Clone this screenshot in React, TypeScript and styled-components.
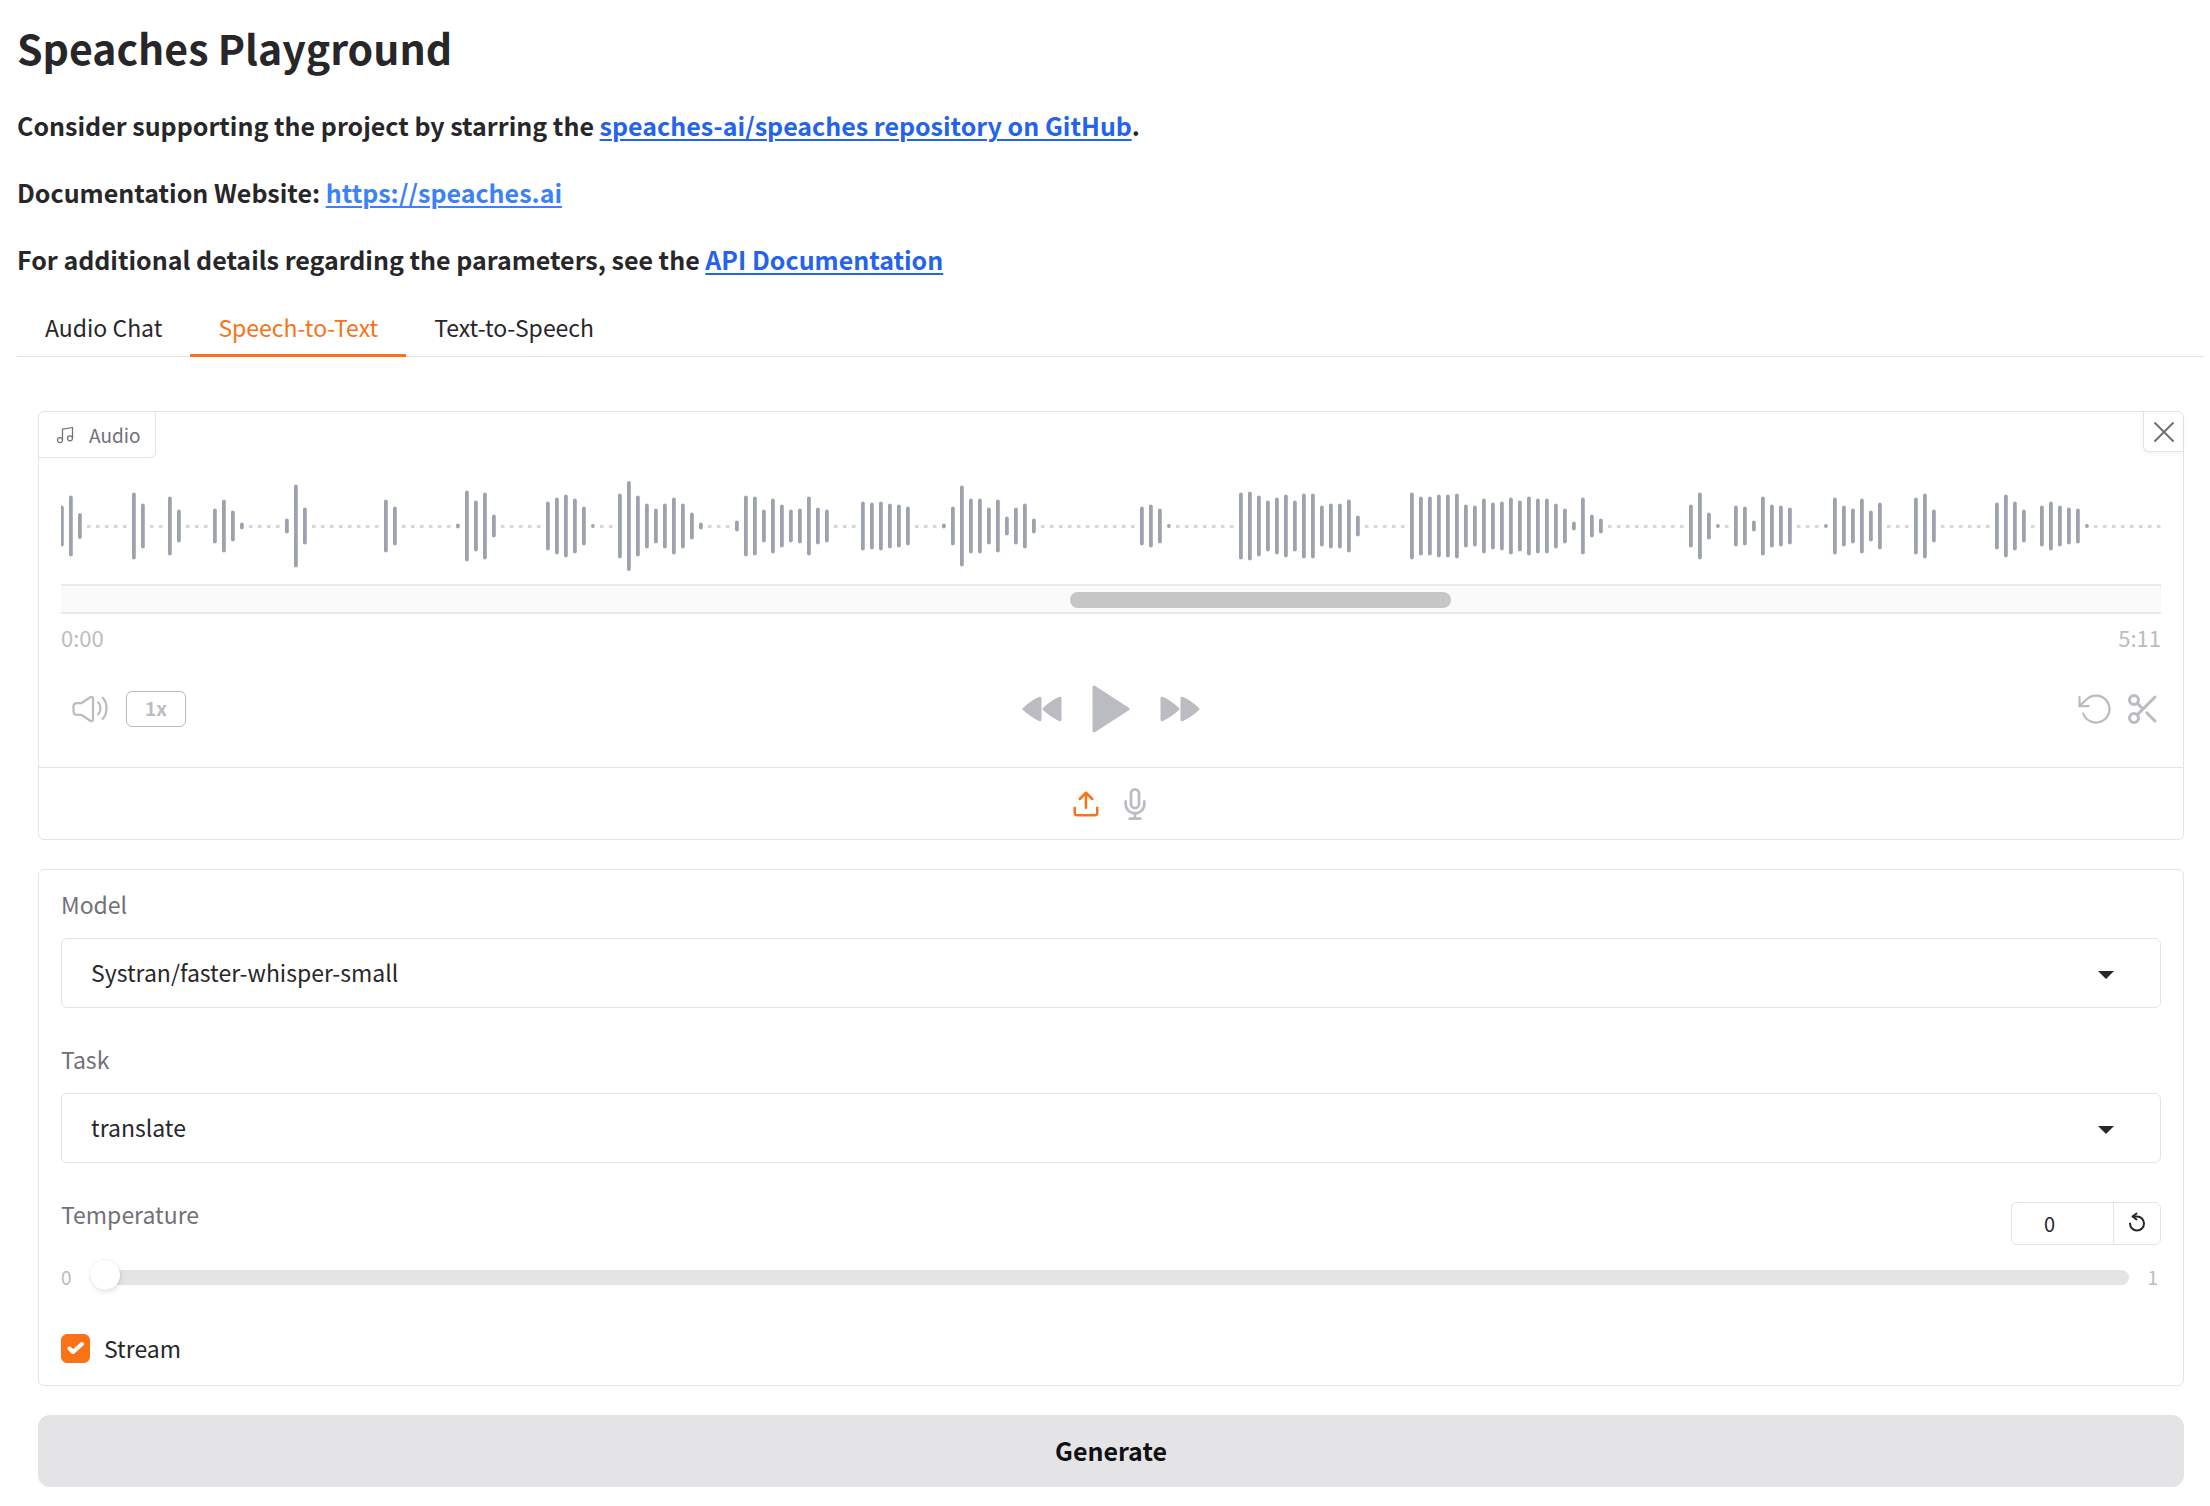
import React, { useState } from "react";
import styled, { createGlobalStyle } from "styled-components";

const colors = {
  text: "#27272a",
  muted: "#71717a",
  faint: "#bbbbc2",
  border: "#e4e4e7",
  accent: "#f97316",
  link: "#2563eb",
  linkSoft: "#3b82f6",
};

const GlobalStyle = createGlobalStyle`
  *, *::before, *::after { box-sizing: border-box; }
  body {
    margin: 0;
    background: #fff;
    color: ${colors.text};
    font-family: "Noto Sans CJK SC", "Source Sans Pro", "Noto Sans", sans-serif;
    font-size: 23px;
    line-height: 32px;
  }
  button, input, select { font: inherit; color: inherit; margin: 0; }
  svg { display: block; }
`;

const Page = styled.main`
  padding: 23px 6px 20px 17px;
`;

const Title = styled.h1`
  margin: 0 0 34px;
  font-size: 41px;
  line-height: 48px;
  font-weight: 600;
`;

const Notes = styled.div`
  display: flex;
  flex-direction: column;
  gap: 27px;
`;

const Note = styled.h3`
  margin: 0;
  font-size: 25px;
  line-height: 40px;
  font-weight: 600;
`;

const Link = styled.a<{ $soft?: boolean }>`
  color: ${(p) => (p.$soft ? colors.linkSoft : colors.link)};
  text-decoration-thickness: 2px;
  text-underline-offset: 3px;
`;

const TabBar = styled.div`
  display: flex;
  margin-top: 21px;
  box-shadow: inset 0 -1px 0 ${colors.border};
`;

const Tab = styled.button<{ $active?: boolean }>`
  height: 57px;
  padding: 0 28px;
  border: 0;
  border-bottom: 3px solid ${(p) => (p.$active ? colors.accent : "transparent")};
  background: none;
  color: ${(p) => (p.$active ? colors.accent : colors.text)};
`;

const Content = styled.section`
  display: flex;
  flex-direction: column;
  gap: 29px;
  padding: 54px 20px 0 21px;
`;

const Panel = styled.div`
  border: 1px solid ${colors.border};
  border-radius: 6px;
`;

const PanelTop = styled.div`
  display: flex;
  justify-content: space-between;
  align-items: flex-start;
`;

const BlockLabel = styled.div`
  display: flex;
  align-items: center;
  gap: 14px;
  height: 46px;
  padding: 0 15px 0 16px;
  border: solid ${colors.border};
  border-width: 0 1px 1px 0;
  border-radius: 0 0 6px 0;
  color: ${colors.muted};
  font-size: 19px;
`;

const CloseButton = styled.button`
  display: grid;
  place-items: center;
  width: 40px;
  height: 40px;
  padding: 0;
  border: solid ${colors.border};
  border-width: 0 0 1px 1px;
  border-radius: 0 6px 0 6px;
  background: #fff;
  color: ${colors.muted};
  box-shadow: 0 2px 4px rgba(0, 0, 0, 0.05);
`;

const Player = styled.div`
  padding: 13px 22px 34px;
`;

const Wave = styled.svg`
  width: 100%;
  height: 113px;
`;

const ScrollTrack = styled.div`
  height: 30px;
  padding: 6px 0;
  border: solid #e9e9e9;
  border-width: 2px 0;
  background: #fafafa;
`;

const ScrollThumb = styled.div`
  height: 16px;
  border-radius: 8px;
  background: #c6c6c6;
`;

const Times = styled.div`
  display: flex;
  justify-content: space-between;
  margin-top: 7px;
  color: ${colors.faint};
  font-size: 22px;
`;

const Controls = styled.div`
  display: grid;
  grid-template-columns: 1fr auto 1fr;
  align-items: center;
  margin-top: 32px;
  color: ${colors.faint};
`;

const Group = styled.div<{ $gap: number; $align?: string }>`
  display: flex;
  align-items: center;
  justify-content: ${(p) => p.$align ?? "flex-start"};
  gap: ${(p) => p.$gap}px;
`;

const LeftGroup = styled(Group)`
  padding-left: 11px;
`;

const IconButton = styled.button<{ $color?: string }>`
  padding: 0;
  border: 0;
  background: none;
  color: ${(p) => p.$color ?? "inherit"};
`;

const SpeedButton = styled.button`
  width: 60px;
  height: 36px;
  padding: 0 0 2px;
  border: 1px solid ${colors.faint};
  border-radius: 6px;
  background: none;
  color: ${colors.faint};
  font-size: 19px;
  font-weight: 700;
  line-height: 32px;
`;

const Sources = styled.div`
  display: flex;
  justify-content: center;
  align-items: center;
  gap: 18px;
  height: 72px;
  border-top: 1px solid ${colors.border};
  color: ${colors.faint};
`;

const Form = styled(Panel)`
  display: flex;
  flex-direction: column;
  padding: 18px 22px 21px;
`;

const Field = styled.div`
  display: flex;
  flex-direction: column;
  gap: 18px;
  margin-bottom: 35px;
`;

const Label = styled.label`
  color: ${colors.muted};
`;

const SelectBox = styled.div`
  display: grid;
  align-items: center;
`;

const Select = styled.select`
  grid-area: 1 / 1;
  width: 100%;
  height: 70px;
  padding: 0 60px 2px 29px;
  appearance: none;
  border: 1px solid ${colors.border};
  border-radius: 6px;
  background: #fff;
`;

const Arrow = styled.svg`
  grid-area: 1 / 1;
  justify-self: end;
  margin: 4px 47px 0 0;
  pointer-events: none;
`;

const SliderHead = styled.div`
  display: flex;
  justify-content: space-between;
  align-items: flex-start;
`;

const NumberBox = styled.div`
  display: flex;
  width: 150px;
  height: 43px;
  margin-top: 4px;
  border: 1px solid ${colors.border};
  border-radius: 6px;
`;

const NumberInput = styled.input`
  flex: 1;
  min-width: 0;
  padding: 0 26px 0 0;
  border: 0;
  background: none;
  text-align: center;
  font-size: 20px;
  appearance: textfield;
  &::-webkit-inner-spin-button { display: none; }
`;

const ResetButton = styled.button`
  display: grid;
  place-items: center;
  width: 47px;
  padding: 0 0 4px;
  border: 0;
  border-left: 1px solid ${colors.border};
  background: none;
`;

const SliderRow = styled.div`
  display: flex;
  align-items: center;
  gap: 18px;
  margin-top: 16px;
  color: ${colors.faint};
  font-size: 19px;
`;

const Bound = styled.span`
  &:last-child { padding-right: 3px; }
`;

const Range = styled.input`
  flex: 1;
  min-width: 0;
  height: 32px;
  appearance: none;
  background: none;
  &::-webkit-slider-runnable-track {
    height: 15px;
    border-radius: 8px;
    background: ${colors.border};
  }
  &::-webkit-slider-thumb {
    appearance: none;
    width: 30px;
    height: 30px;
    margin-top: -10px;
    border-radius: 50%;
    background: #fff;
    box-shadow: 0 0 0 1px rgba(0, 0, 0, 0.03), 1px 2px 5px rgba(0, 0, 0, 0.1);
  }
`;

const CheckRow = styled.label`
  display: flex;
  align-items: center;
  gap: 14px;
  margin-top: 39px;
`;

const CheckBox = styled.span`
  display: grid;
  place-items: center;
  & > * { grid-area: 1 / 1; }
`;

const Check = styled.input`
  width: 29px;
  height: 29px;
  appearance: none;
  border: 1px solid #d4d4d8;
  border-radius: 6px;
  &:checked { background: ${colors.accent}; border-color: ${colors.accent}; }
`;

const Tick = styled.svg`
  pointer-events: none;
`;

const GenerateButton = styled.button`
  height: 72px;
  padding: 0 0 2px;
  border: 0;
  border-radius: 12px;
  background: ${colors.border};
  color: #111113;
  font-size: 25px;
  font-weight: 600;
`;

// Amplitudes in pixels; 0 is silence and is drawn as a pale dot.
const amplitudes = [
  41, 61, 26, 0, 0, 0, 0, 0, 67, 45, 0, 0, 59, 33, 0, 0, 0, 35, 53, 31,
  7, 0, 0, 0, 0, 15, 83, 37, 0, 0, 0, 0, 0, 0, 0, 0, 53, 39, 0, 0,
  0, 0, 0, 0, 5, 71, 51, 67, 23, 0, 0, 0, 0, 0, 49, 57, 63, 55, 39, 4,
  0, 0, 65, 90, 61, 45, 35, 45, 57, 45, 27, 7, 0, 0, 0, 11, 61, 59, 33, 55,
  43, 33, 35, 59, 37, 33, 0, 0, 0, 49, 47, 49, 45, 43, 39, 0, 0, 0, 5, 39,
  81, 55, 55, 37, 53, 19, 37, 45, 15, 0, 0, 0, 0, 0, 0, 0, 0, 0, 0, 0,
  39, 43, 35, 4, 0, 0, 0, 0, 0, 0, 0, 67, 69, 61, 51, 57, 63, 51, 65, 65,
  41, 45, 45, 53, 21, 0, 0, 0, 0, 0, 67, 59, 59, 63, 63, 65, 43, 41, 55, 47,
  49, 57, 51, 59, 55, 55, 45, 35, 9, 57, 23, 15, 0, 0, 0, 0, 0, 0, 0, 0,
  0, 43, 67, 27, 4, 0, 41, 39, 11, 59, 43, 41, 37, 0, 0, 0, 4, 57, 41, 35,
  55, 31, 47, 0, 0, 0, 57, 65, 33, 0, 0, 0, 0, 0, 0, 47, 63, 49, 33, 0,
  41, 49, 41, 37, 35, 4, 0, 0, 0, 0, 0, 0, 0, 0,
];

function Waveform() {
  const middle = 54;
  return (
    <Wave role="img" aria-label="Audio waveform">
      {amplitudes.map((a, i) =>
        a === 0 ? (
          <rect key={i} x={i * 9 - 1} y={middle} width={3.5} height={3} fill="#d3d6dc" />
        ) : (
          <rect key={i} x={i * 9 - 1} y={middle + 1 - a / 2} width={3.8} height={a} rx={1.9} fill="#9ca3af" />
        )
      )}
    </Wave>
  );
}

type IconProps = { size: number; stroke?: number; children: React.ReactNode };

function Icon({ size, stroke = 2, children }: IconProps) {
  return (
    <svg
      width={size}
      height={size}
      viewBox="0 0 24 24"
      fill="none"
      stroke="currentColor"
      strokeWidth={stroke}
      strokeLinecap="round"
      strokeLinejoin="round"
      aria-hidden="true"
    >
      {children}
    </svg>
  );
}

function SkipIcon({ back }: { back?: boolean }) {
  return (
    <svg width="40" height="26" viewBox="0 0 40 26" fill="currentColor" stroke="currentColor" strokeWidth="3" strokeLinejoin="round" aria-hidden="true">
      <g transform={back ? "matrix(-1 0 0 1 40 0)" : undefined}>
        <path d="M2 2.200v21.600q8.500-3.800 16-10.800-7.500-7-16-10.800z" />
        <path d="M22 2.200v21.600q8.500-3.800 16-10.800-7.500-7-16-10.800z" />
      </g>
    </svg>
  );
}

function Dropdown({ id, label, options }: { id: string; label: string; options: string[] }) {
  return (
    <Field>
      <Label htmlFor={id}>{label}</Label>
      <SelectBox>
        <Select id={id}>
          {options.map((o) => (
            <option key={o}>{o}</option>
          ))}
        </Select>
        <Arrow width="16" height="8" viewBox="0 0 16 8" fill={colors.text} aria-hidden="true">
          <path d="M0 0h16l-8 8z" />
        </Arrow>
      </SelectBox>
    </Field>
  );
}

const tabs = ["Audio Chat", "Speech-to-Text", "Text-to-Speech"];

export default function App() {
  const [tab, setTab] = useState(1);
  const [temperature, setTemperature] = useState("0");

  return (
    <>
      <GlobalStyle />
      <Page>
        <Title>Speaches Playground</Title>
        <Notes>
          <Note>
            Consider supporting the project by starring the{" "}
            <Link href="#repository">speaches-ai/speaches repository on GitHub</Link>.
          </Note>
          <Note>
            Documentation Website:{" "}
            <Link $soft href="#website">https://speaches.ai</Link>
          </Note>
          <Note>
            For additional details regarding the parameters, see the{" "}
            <Link href="#api">API Documentation</Link>
          </Note>
        </Notes>

        <TabBar role="tablist">
          {tabs.map((name, i) => (
            <Tab key={name} role="tab" aria-selected={tab === i} $active={tab === i} onClick={() => setTab(i)}>
              {name}
            </Tab>
          ))}
        </TabBar>

        <Content>
          <Panel>
            <PanelTop>
              <BlockLabel>
                <Icon size={20} stroke={1.5}>
                  <path d="M9 18V5l12-2v13" />
                  <circle cx="6" cy="18" r="3" />
                  <circle cx="18" cy="16" r="3" />
                </Icon>
                Audio
              </BlockLabel>
              <CloseButton aria-label="Clear">
                <Icon size={24} stroke={2}>
                  <path d="M3 3l18 18M21 3L3 21" />
                </Icon>
              </CloseButton>
            </PanelTop>

            <Player>
              <Waveform />
              <ScrollTrack>
                <ScrollThumb style={{ marginLeft: `${(1009 / 2100) * 100}%`, width: `${(381 / 2100) * 100}%` }} />
              </ScrollTrack>
              <Times>
                <time>0:00</time>
                <time>5:11</time>
              </Times>
              <Controls>
                <LeftGroup $gap={18}>
                  <IconButton aria-label="Adjust volume">
                    <Icon size={36} stroke={1.5}>
                      <path d="M1 13.857v-3.714a2 2 0 0 1 2-2h2.900a1 1 0 0 0 .55-.165l6-3.956A1 1 0 0 1 14 4.857v14.286a1 1 0 0 1-1.550.835l-6-3.956a1 1 0 0 0-.55-.165H3a2 2 0 0 1-2-2z" />
                      <path d="M17.500 7.500S19 9 19 11.500s-1.500 4-1.500 4" />
                      <path d="M20.500 4.500S23 7 23 11.500s-2.500 7-2.500 7" />
                    </Icon>
                  </IconButton>
                  <SpeedButton>1x</SpeedButton>
                </LeftGroup>
                <Group $gap={30}>
                  <IconButton aria-label="Skip backwards"><SkipIcon back /></IconButton>
                  <IconButton aria-label="Play">
                    <svg width="38" height="48" viewBox="0 0 38 48" fill="currentColor" stroke="currentColor" strokeWidth="3" strokeLinejoin="round" aria-hidden="true">
                      <path d="M2 2l34 22L2 46z" />
                    </svg>
                  </IconButton>
                  <IconButton aria-label="Skip forward"><SkipIcon /></IconButton>
                </Group>
                <Group $gap={11} $align="flex-end">
                  <IconButton aria-label="Reset audio">
                    <Icon size={36} stroke={1.5}>
                      <path d="M1 4v6h6" />
                      <path d="M3.510 15a9 9 0 1 0 2.130-9.360L1 10" />
                    </Icon>
                  </IconButton>
                  <IconButton aria-label="Trim audio">
                    <Icon size={36}>
                      <circle cx="6" cy="6" r="3" />
                      <circle cx="6" cy="18" r="3" />
                      <path d="M20 4L8.120 15.880M14.470 14.480L20 20M8.120 8.120L12 12" />
                    </Icon>
                  </IconButton>
                </Group>
              </Controls>
            </Player>

            <Sources>
              <IconButton aria-label="Upload file" $color={colors.accent}>
                <Icon size={30}>
                  <path d="M21 15v4a2 2 0 0 1-2 2H5a2 2 0 0 1-2-2v-4" />
                  <path d="M17 8l-5-5-5 5M12 3v12" />
                </Icon>
              </IconButton>
              <IconButton aria-label="Record audio">
                <Icon size={32}>
                  <path d="M12 1a3 3 0 0 0-3 3v8a3 3 0 0 0 6 0V4a3 3 0 0 0-3-3z" />
                  <path d="M19 10v2a7 7 0 0 1-14 0v-2M12 19v4M8 23h8" />
                </Icon>
              </IconButton>
            </Sources>
          </Panel>

          <Form as="form" onSubmit={(e: React.FormEvent) => e.preventDefault()}>
            <Dropdown id="model" label="Model" options={["Systran/faster-whisper-small"]} />
            <Dropdown id="task" label="Task" options={["translate", "transcribe"]} />
            <SliderHead>
              <Label htmlFor="temperature">Temperature</Label>
              <NumberBox>
                <NumberInput
                  type="number"
                  aria-label="Temperature value"
                  value={temperature}
                  onChange={(e) => setTemperature(e.target.value)}
                />
                <ResetButton type="button" aria-label="Reset to default value" onClick={() => setTemperature("0")}>
                  <svg width="18" height="20" viewBox="0 0 18 20" fill="none" stroke="currentColor" strokeWidth="2" strokeLinecap="round" strokeLinejoin="round" aria-hidden="true">
                    <path d="M2 11.500a7 7 0 1 0 7-7H5" />
                    <path d="M8.500 1.500l-4 3 4 3" />
                  </svg>
                </ResetButton>
              </NumberBox>
            </SliderHead>
            <SliderRow>
              <Bound>0</Bound>
              <Range
                id="temperature"
                type="range"
                min="0"
                max="1"
                step="0.01"
                value={temperature}
                onChange={(e) => setTemperature(e.target.value)}
              />
              <Bound>1</Bound>
            </SliderRow>
            <CheckRow>
              <CheckBox>
                <Check type="checkbox" defaultChecked />
                <Tick width="18" height="14" viewBox="0 0 18 14" fill="none" stroke="#fff" strokeWidth="4" strokeLinecap="round" strokeLinejoin="round" aria-hidden="true">
                  <path d="M2.500 7.500l3.500 3.500L15 3" />
                </Tick>
              </CheckBox>
              Stream
            </CheckRow>
          </Form>

          <GenerateButton type="button">Generate</GenerateButton>
        </Content>
      </Page>
    </>
  );
}
